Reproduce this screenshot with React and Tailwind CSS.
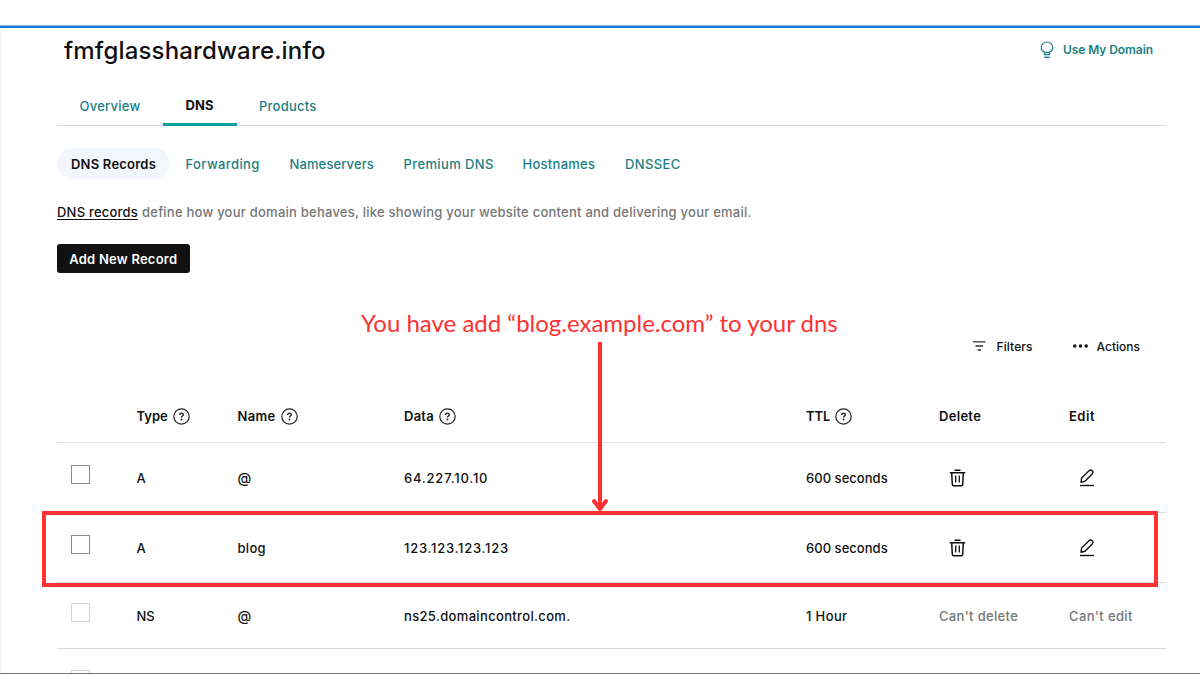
const HelpIcon = () => (
  <svg className="ml-[5px] shrink-0" width="17" height="17" viewBox="0 0 17 17" fill="none" stroke="#222" strokeWidth="1.2">
    <circle cx="8.5" cy="8.5" r="7.7" />
    <path d="M6.7 6.9c0-1.1.8-1.8 1.8-1.8s1.8.7 1.8 1.6c0 1.2-1.8 1.4-1.8 2.7" strokeWidth="1.4" />
    <circle cx="8.5" cy="11.5" r=".9" fill="#222" stroke="none" />
  </svg>
);

const TrashIcon = () => (
  <svg className="ml-[9.5px]" width="17" height="18" viewBox="0 0 17 18" fill="none" stroke="#111" strokeWidth="1.5">
    <path d="M5.5 1.2h6M.8 3.8h15.400M2.700 4l.6 11.200c.05 1 .6 1.500 1.500 1.500h7.400c.9 0 1.450-.5 1.500-1.500L14.300 4" />
    <path d="M6.700 6.500v7M10.300 6.500v7" strokeWidth="1.300" />
  </svg>
);

const PenIcon = () => (
  <svg className="ml-[10px]" width="16" height="18" viewBox="0 0 16 18" fill="none" stroke="#111" strokeWidth="1.4" strokeLinejoin="round">
    <path d="M2 13.200l.6-4.200 7.400-7.200c1-.9 2.200-.9 3.200 0s.9 2.200 0 3.200L6 12.200 2 13.200z" />
    <path d="M1 16.500h14" strokeWidth="1.400" />
  </svg>
);

const BulbIcon = () => (
  <svg className="mb-px" width="14" height="18" viewBox="0 0 14 18" fill="none" stroke="#1a7f82" strokeWidth="1.200">
    <path d="M4.400 13.600v-2.500C2.300 10.100 1.200 8.600 1.200 6.700c0-3.300 2.600-5.700 5.800-5.700s5.800 2.400 5.800 5.700c0 1.900-1.100 3.400-3.200 4.400v2.500z" />
    <path d="M4.400 11.600h5.200" />
    <path d="M4.200 16.300h5.600" strokeWidth="1.400" />
  </svg>
);

const GRID = "grid grid-cols-[79.5px_101px_166.500px_402px_133px_130px_1fr] items-center";

const headers = [
  { text: "Type", help: true, cls: "tracking-[0px]" },
  { text: "Name", help: true, cls: "tracking-[0.32px]" },
  { text: "Data", help: true, cls: "tracking-[0.26px]" },
  { text: "TTL", help: true, cls: "tracking-[-0.1px]" },
  { text: "Delete", cls: "tracking-[0.3px]" },
  { text: "Edit", cls: "tracking-[0.5px]" },
];

const rows = [
  { type: "A", name: "@", data: "64.227.10.10", dataCls: "tracking-[0.78px]", ttl: "600 seconds", ttlCls: "tracking-[0.04px]", height: "h-[70px]", editable: true },
  { type: "A", name: "blog", data: "123.123.123.123", dataCls: "tracking-[0.74px]", ttl: "600 seconds", ttlCls: "tracking-[0.04px]", height: "h-[70px]", editable: true },
  { type: "NS", name: "@", data: "ns25.domaincontrol.com.", dataCls: "tracking-[0.34px]", ttl: "1 Hour", ttlCls: "tracking-[0.38px]", height: "h-[66px]", editable: false },
];

function Row({ row }) {
  return (
    <div className={`${GRID} ${row.height} border-b border-[#d3dbe1] pt-px`}>
      <div className={`mb-[7px] ml-[14px] size-[19px] border ${row.editable ? "border-[#8c8c8c]" : "border-[#d4d4d4]"}`} />
      <div>{row.type}</div>
      <div className={row.name === "@" ? "text-[14px]" : "tracking-[0.3px]"}>{row.name}</div>
      <div className={row.dataCls}>{row.data}</div>
      <div className={row.ttlCls}>{row.ttl}</div>
      {row.editable ? <TrashIcon /> : <div className="tracking-[0.34px] text-[#767676]">Can't delete</div>}
      {row.editable ? <PenIcon /> : <div className="tracking-[0.38px] text-[#767676]">Can't edit</div>}
    </div>
  );
}

export default function App() {
  return (
    <div className="relative h-[700px] w-[1200px] overflow-hidden bg-white pt-[25px] font-['Inter',sans-serif] text-[13px] leading-5 font-medium text-[#111]">
      <div className="flex h-[649px] flex-col overflow-hidden border-b border-[#77756f]">
        <div className="h-[3px] shrink-0 border-t border-[#8bbcec] bg-[#1976d9]" />
        <div className="h-[645px] shrink-0 border-l-2 border-[#f5f5f5] pr-[34px] pl-[55px]">
          <header className="flex h-[45px] items-center justify-between pr-[13px] pl-[7px]">
            <h1 className="text-[24px] leading-8 font-medium tracking-[0.17px]">fmfglasshardware.info</h1>
            <a className="flex items-center gap-[9px] pb-px text-[12px] font-semibold tracking-[-0.07px] text-[#1a7f82]">
              <BulbIcon />
              Use My Domain
            </a>
          </header>

          <nav className="flex h-[53px] items-end border-b border-[#dcdcdc] text-[#1a7f82]">
            <a className="ml-[22.500px] pb-[9px] tracking-[0.25px]">Overview</a>
            <a className="mb-[-1px] ml-[22px] w-[74px] border-b-[3px] border-[#09a1a1] pb-[8px] text-center font-bold text-[#111]">DNS</a>
            <a className="ml-[22.500px] pb-[9px] tracking-[0.22px]">Products</a>
          </nav>

          <nav className="mt-[22px] flex h-[31px] items-center text-[#1a7f82]">
            <a className="flex h-[31px] w-[113px] items-center justify-center rounded-full bg-[#f3f7fd] font-semibold tracking-[0.22px] text-[#111]">DNS Records</a>
            <a className="ml-[15.500px] w-[104px] tracking-[0.4px]">Forwarding</a>
            <a className="w-[114px] tracking-[0.12px]">Nameservers</a>
            <a className="w-[119px] tracking-[0.38px]">Premium DNS</a>
            <a className="w-[102.500px] tracking-[0.27px]">Hostnames</a>
            <a className="tracking-[0.36px]">DNSSEC</a>
          </nav>

          <p className="mt-[23px] flex gap-[4px] whitespace-nowrap text-[#767676]">
            <a className="tracking-[0.21px] text-[#111] underline underline-offset-2">DNS records</a>
            <span className="tracking-[0.238px]">define how your domain behaves, like showing your website content and delivering your email.</span>
          </p>

          <button className="mt-[22px] flex h-[29px] w-[132.500px] items-center justify-center rounded-[3px] bg-[#111] pt-px font-semibold tracking-[0.23px] text-white">
            Add New Record
          </button>

          <div className="mt-[64px] flex h-5 items-center justify-end pr-[26px] text-[12px]">
            <svg className="mr-[10px] mb-[2px]" width="13" height="10" viewBox="0 0 13 10" stroke="#333" strokeWidth="1.400">
              <path d="M0 .9h12.500M2.500 5h7.500M4.600 9h3.400" />
            </svg>
            <span className="tracking-[0.1px]">Filters</span>
            <svg className="mr-[9px] mb-[2px] ml-[40px]" width="15" height="4" viewBox="0 0 15 4" fill="#111">
              <circle cx="1.800" cy="2" r="1.750" />
              <circle cx="7.500" cy="2" r="1.750" />
              <circle cx="13.200" cy="2" r="1.750" />
            </svg>
            <span>Actions</span>
          </div>

          <div className={`${GRID} mt-[33px] h-[53px] border-b border-[#dfe3e6] font-semibold`}>
            <div />
            {headers.map((h) => (
              <div key={h.text} className="flex items-center">
                <span className={h.cls}>{h.text}</span>
                {h.help && <HelpIcon />}
              </div>
            ))}
          </div>
          {rows.map((row, i) => (
            <Row key={i} row={row} />
          ))}
          <div className="mt-[21px] ml-[14px] size-[19px] border border-[#d4d4d4]" />
        </div>
      </div>

      <div className="absolute top-[305px] left-[361px] font-['Lato',cursive] text-[24px] leading-9 font-normal whitespace-nowrap text-[#ff3131]">
        You have add “blog.example.com” to your dns
      </div>
      <svg className="absolute top-[342px] left-[590px]" width="20" height="170" viewBox="0 0 20 170" fill="none" stroke="#ff3131" strokeWidth="4">
        <path d="M10 0v165" />
        <path d="M4 159l6 8 6-8" strokeLinecap="round" strokeLinejoin="round" />
      </svg>
      <div className="absolute top-[511px] left-[42px] h-[76px] w-[1116px] border-4 border-[#ff3131]" />
    </div>
  );
}
